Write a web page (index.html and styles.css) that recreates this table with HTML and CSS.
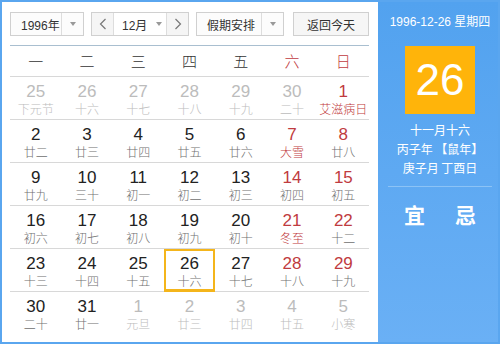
FILE: index.html
```html
<!DOCTYPE html>
<html lang="zh">
<head>
<meta charset="utf-8">
<link rel="stylesheet" href="styles.css">
</head>
<body>
<div class="cal">
  <div class="main">
    <div class="toolbar">
      <div class="sel sel-year"><span class="sel-text">1996年</span><span class="sel-arrow"><i class="tri"></i></span></div>
      <div class="sel sel-month">
        <span class="nav"><svg width="8" height="12" viewBox="0 0 8 12"><path d="M6.5 1 L1.5 6 L6.5 11" fill="none" stroke="#777" stroke-width="1.2"/></svg></span>
        <span class="month-text">12月<i class="tri"></i></span>
        <span class="nav"><svg width="8" height="12" viewBox="0 0 8 12"><path d="M1.5 1 L6.5 6 L1.5 11" fill="none" stroke="#777" stroke-width="1.2"/></svg></span>
      </div>
      <div class="sel sel-holiday"><span class="sel-text">假期安排</span><span class="sel-arrow"><i class="tri"></i></span></div>
      <div class="btn-today">返回今天</div>
    </div>
    <div class="grid">
      <div class="wk">一</div><div class="wk">二</div><div class="wk">三</div><div class="wk">四</div><div class="wk">五</div><div class="wk red">六</div><div class="wk red">日</div>

      <div class="cell muted"><b>25</b><span>下元节</span></div>
      <div class="cell muted"><b>26</b><span>十六</span></div>
      <div class="cell muted"><b>27</b><span>十七</span></div>
      <div class="cell muted"><b>28</b><span>十八</span></div>
      <div class="cell muted"><b>29</b><span>十九</span></div>
      <div class="cell muted"><b>30</b><span>二十</span></div>
      <div class="cell we fest"><b>1</b><span>艾滋病日</span></div>

      <div class="cell"><b>2</b><span>廿二</span></div>
      <div class="cell"><b>3</b><span>廿三</span></div>
      <div class="cell"><b>4</b><span>廿四</span></div>
      <div class="cell"><b>5</b><span>廿五</span></div>
      <div class="cell"><b>6</b><span>廿六</span></div>
      <div class="cell we fest"><b>7</b><span>大雪</span></div>
      <div class="cell we"><b>8</b><span>廿八</span></div>

      <div class="cell"><b>9</b><span>廿九</span></div>
      <div class="cell"><b>10</b><span>三十</span></div>
      <div class="cell"><b>11</b><span>初一</span></div>
      <div class="cell"><b>12</b><span>初二</span></div>
      <div class="cell"><b>13</b><span>初三</span></div>
      <div class="cell we"><b>14</b><span>初四</span></div>
      <div class="cell we"><b>15</b><span>初五</span></div>

      <div class="cell"><b>16</b><span>初六</span></div>
      <div class="cell"><b>17</b><span>初七</span></div>
      <div class="cell"><b>18</b><span>初八</span></div>
      <div class="cell"><b>19</b><span>初九</span></div>
      <div class="cell"><b>20</b><span>初十</span></div>
      <div class="cell we fest"><b>21</b><span>冬至</span></div>
      <div class="cell we"><b>22</b><span>十二</span></div>

      <div class="cell"><b>23</b><span>十三</span></div>
      <div class="cell"><b>24</b><span>十四</span></div>
      <div class="cell"><b>25</b><span>十五</span></div>
      <div class="cell today"><b>26</b><span>十六</span></div>
      <div class="cell"><b>27</b><span>十七</span></div>
      <div class="cell we"><b>28</b><span>十八</span></div>
      <div class="cell we"><b>29</b><span>十九</span></div>

      <div class="cell last"><b>30</b><span>二十</span></div>
      <div class="cell last"><b>31</b><span>廿一</span></div>
      <div class="cell last muted"><b>1</b><span>元旦</span></div>
      <div class="cell last muted"><b>2</b><span>廿三</span></div>
      <div class="cell last muted"><b>3</b><span>廿四</span></div>
      <div class="cell last muted"><b>4</b><span>廿五</span></div>
      <div class="cell last muted"><b>5</b><span>小寒</span></div>
    </div>
  </div>
  <div class="side">
    <div class="side-date">1996-12-26 星期四</div>
    <div class="big-day">26</div>
    <div class="lunar">
      <div>十一月十六</div>
      <div>丙子年 【鼠年】</div>
      <div>庚子月 丁酉日</div>
    </div>
    <div class="side-line"></div>
    <div class="yiji"><span>宜</span><span>忌</span></div>
  </div>
</div>
</body>
</html>
```

FILE: styles.css
```css
html, body {
  margin: 0;
  padding: 0;
  background: #fff;
}
body {
  font-family: "Liberation Sans", "Noto Sans CJK SC", sans-serif;
  color: #222;
}
.cal {
  width: 500px;
  height: 344px;
  box-sizing: border-box;
  border: 2px solid #5aa6ef;
  display: flex;
}
.main {
  width: 376px;
  box-sizing: border-box;
  padding: 10px 9px 0 8px;
  background: #fff;
}
.toolbar {
  display: flex;
  height: 24px;
  font-size: 12px;
  color: #333;
}
.sel {
  display: flex;
  box-sizing: border-box;
  height: 24px;
  border: 1px solid #d0d0d0;
  background: #fcfcfc;
}
.sel-text {
  display: flex;
  align-items: center;
  padding-left: 10px;
  flex: 1;
}
.sel-arrow {
  width: 21px;
  border-left: 1px solid #ddd;
  display: flex;
  align-items: center;
  justify-content: center;
}
.tri {
  display: inline-block;
  width: 0;
  height: 0;
  border-left: 3.5px solid transparent;
  border-right: 3.5px solid transparent;
  border-top: 4px solid #999;
}
.sel-year { width: 74px; }
.sel-month { width: 98px; margin-left: 7px; }
.sel-holiday { width: 88px; margin-left: 7px; }
.nav {
  width: 21px;
  display: flex;
  align-items: center;
  justify-content: center;
  background: #f5f5f5;
}
.month-text {
  flex: 1;
  border-left: 1px solid #ddd;
  border-right: 1px solid #ddd;
  display: flex;
  align-items: center;
  padding-left: 8px;
  gap: 9px;
  background: #fff;
}
.btn-today {
  margin-left: 9px;
  width: 76px;
  height: 24px;
  box-sizing: border-box;
  border: 1px solid #d0d0d0;
  background: #f6f6f6;
  display: flex;
  align-items: center;
  justify-content: center;
}
.grid {
  margin-top: 9px;
  border-top: 1px solid #a9bfd0;
  display: grid;
  grid-template-columns: repeat(7, 1fr);
}
.wk {
  height: 30px;
  line-height: 30px;
  text-align: center;
  font-size: 15px;
  color: #333;
  border-bottom: 1px solid #d8d8d8;
  font-family: "Noto Sans CJK SC", sans-serif;
  font-weight: 300;
}
.wk.red { color: #bf3b40; }
.cell {
  height: 43px;
  box-sizing: border-box;
  border-bottom: 1px solid #d8d8d8;
  padding-top: 6px;
  display: flex;
  flex-direction: column;
  align-items: center;
}
.cell.last { border-bottom: none; }
.cell b {
  font-weight: normal;
  font-size: 17px;
  line-height: 18px;
  color: #222;
}
.cell span {
  font-family: "Noto Sans CJK SC", sans-serif;
  font-weight: 300;
  font-size: 12px;
  line-height: 16px;
  color: #707070;
}
.cell.we b { color: #bf3b40; }
.cell.fest span { color: #bf3b40; }
.cell.muted b, .cell.muted span { color: #bcbcbc; }
.cell.today {
  box-shadow: inset 0 0 0 2px #f4b51b;
  border-bottom-color: #f4b51b;
}
.side {
  flex: 1;
  background: linear-gradient(#52a2ef, #6ab0f5);
  color: #fff;
  display: flex;
  flex-direction: column;
  align-items: center;
  padding: 12px 0 0 4px;
}
.side-date {
  font-size: 12px;
  line-height: 16px;
}
.big-day {
  margin-top: 16px;
  width: 70px;
  height: 68px;
  background: #ffb40a;
  font-size: 44px;
  line-height: 68px;
  text-align: center;
}
.lunar {
  margin-top: 6px;
  font-family: "Noto Sans CJK SC", sans-serif;
  font-size: 12px;
  line-height: 19px;
  text-align: center;
}
.side-line {
  margin-top: 9px;
  width: 104px;
  height: 1px;
  background: #8cc3f6;
}
.yiji {
  margin-top: 15px;
  display: flex;
  gap: 30px;
  font-family: "Noto Sans CJK SC", sans-serif;
  font-size: 21px;
  font-weight: bold;
  line-height: 24px;
}
```
